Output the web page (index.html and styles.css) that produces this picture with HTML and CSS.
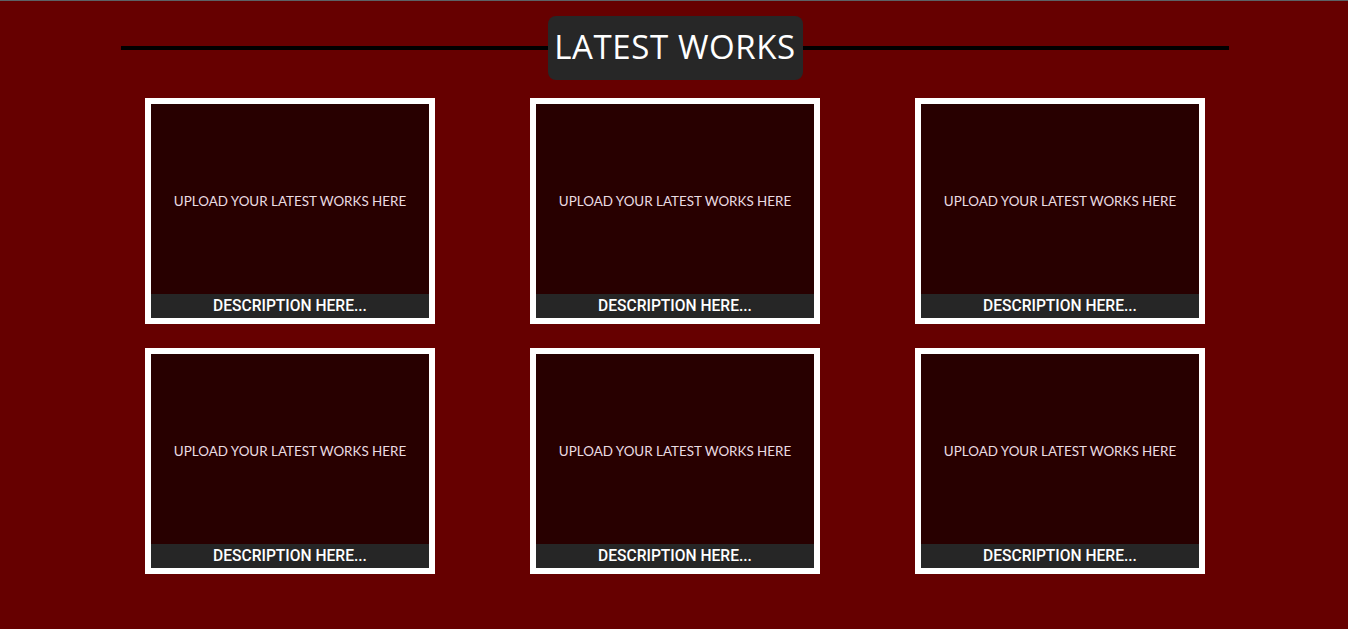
FILE: index.html
```html
<!DOCTYPE html>
<html lang="en">
<head>
<meta charset="utf-8">
<title>Latest Works</title>
<link rel="stylesheet" href="styles.css">
</head>
<body>
<section class="works">
  <div class="heading">
    <span class="rule"></span>
    <h1 class="title">LATEST WORKS</h1>
    <span class="rule"></span>
  </div>
  <div class="grid">
    <div class="card"><div class="media">UPLOAD YOUR LATEST WORKS HERE</div><div class="desc">DESCRIPTION HERE...</div></div>
    <div class="card"><div class="media">UPLOAD YOUR LATEST WORKS HERE</div><div class="desc">DESCRIPTION HERE...</div></div>
    <div class="card"><div class="media">UPLOAD YOUR LATEST WORKS HERE</div><div class="desc">DESCRIPTION HERE...</div></div>
    <div class="card"><div class="media">UPLOAD YOUR LATEST WORKS HERE</div><div class="desc">DESCRIPTION HERE...</div></div>
    <div class="card"><div class="media">UPLOAD YOUR LATEST WORKS HERE</div><div class="desc">DESCRIPTION HERE...</div></div>
    <div class="card"><div class="media">UPLOAD YOUR LATEST WORKS HERE</div><div class="desc">DESCRIPTION HERE...</div></div>
  </div>
</section>
</body>
</html>
```
FILE: styles.css
```css
html, body {
  margin: 0;
  padding: 0;
}
body {
  background: #660000;
  border-top: 1px solid #5c6266;
  min-height: 628px;
  font-family: "Open Sans", sans-serif;
}
.works {
  width: 1108px;
  margin: 0 auto;
  padding-left: 2px;
  padding-top: 15px;
}
.heading {
  display: flex;
  align-items: center;
}
.rule {
  flex: 1;
  height: 4px;
  background: #000;
}
.title {
  margin: 0;
  width: 255px;
  height: 64px;
  box-sizing: border-box;
  border-radius: 8px;
  background: #272727;
  color: #fff;
  font-family: "Open Sans", sans-serif;
  font-weight: 400;
  font-size: 33px;
  line-height: 62px;
  text-align: center;
  letter-spacing: 0.6px;
  white-space: nowrap;
}
.grid {
  width: 1060px;
  margin: 18px auto 0;
  display: grid;
  grid-template-columns: repeat(3, 290px);
  column-gap: 95px;
  row-gap: 24px;
}
.card {
  height: 226px;
  box-sizing: border-box;
  border: 6px solid #fff;
  display: flex;
  flex-direction: column;
  background: #280000;
}
.media {
  flex: 1;
  display: flex;
  align-items: center;
  justify-content: center;
  color: #eadce2;
  font-family: "Lato", sans-serif;
  font-weight: 400;
  font-size: 13.4px;
  padding-top: 4px;
}
.desc {
  height: 24px;
  background: #262626;
  color: #fff;
  font-family: "Roboto", sans-serif;
  font-weight: 500;
  font-size: 15.6px;
  line-height: 24px;
  text-align: center;
}
```
